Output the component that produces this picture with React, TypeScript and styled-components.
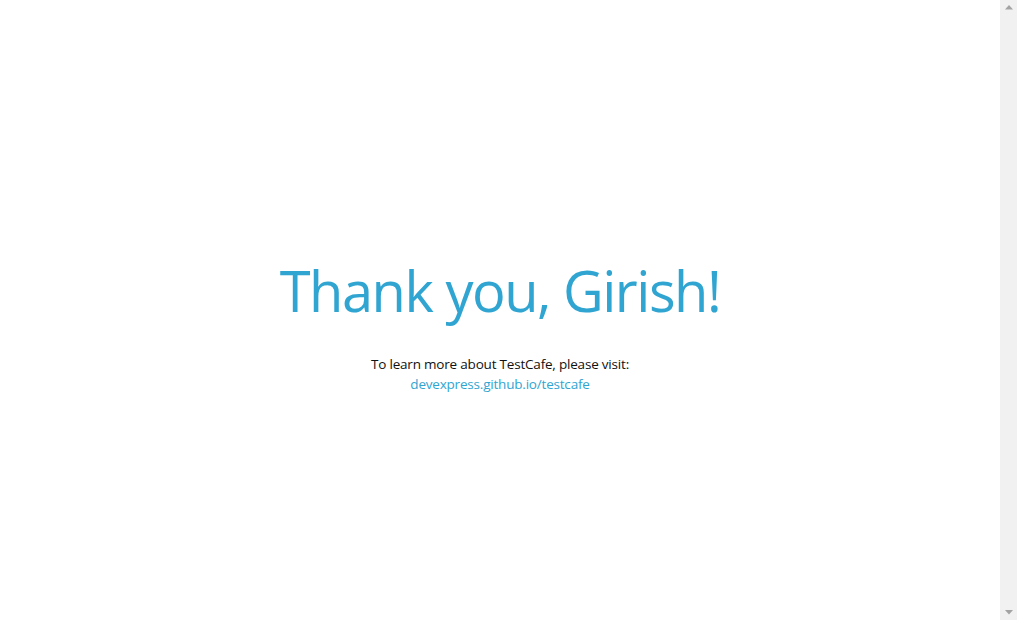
import { createGlobalStyle } from "styled-components";
import styled from "styled-components";

const GlobalStyle = createGlobalStyle`
  html, body {
    margin: 0;
    padding: 0;
    height: 100%;
    overflow: hidden;
    background: #fff;
  }
  body {
    font-family: "Open Sans", "Noto Sans", sans-serif;
  }
`;

const Screen = styled.div`
  display: flex;
  height: 100vh;
`;

const Main = styled.main`
  flex: 1;
  display: flex;
  flex-direction: column;
  align-items: center;
  padding-top: 257px;
`;

const Title = styled.h1`
  margin: 0;
  font-size: 56px;
  line-height: 67px;
  font-weight: 400;
  color: #31a5d1;
  letter-spacing: -1.5px;
`;

const Info = styled.p`
  margin: 30px 0 0;
  font-size: 13.5px;
  line-height: 20px;
  color: #111;
  text-align: center;
  letter-spacing: -0.2px;
`;

const Link = styled.a`
  color: #31a5d1;
  text-decoration: none;
`;

const ScrollTrack = styled.div`
  width: 17px;
  background: #f1f1f1;
  display: flex;
  flex-direction: column;
  justify-content: space-between;
  align-items: center;
  padding: 5px 0;
`;

function Arrow({ down }: { down?: boolean }) {
  return (
    <svg width="8" height="5" viewBox="0 0 8 5">
      <path d={down ? "M0 0H8L4 4.5Z" : "M0 4.5H8L4 0Z"} fill="#a3a3a3" />
    </svg>
  );
}

export default function App() {
  return (
    <>
      <GlobalStyle />
      <Screen>
        <Main>
          <Title>Thank you, Girish!</Title>
          <Info>
            To learn more about TestCafe, please visit:
            <br />
            <Link href="#">devexpress.github.io/testcafe</Link>
          </Info>
        </Main>
        <ScrollTrack>
          <Arrow />
          <Arrow down />
        </ScrollTrack>
      </Screen>
    </>
  );
}
